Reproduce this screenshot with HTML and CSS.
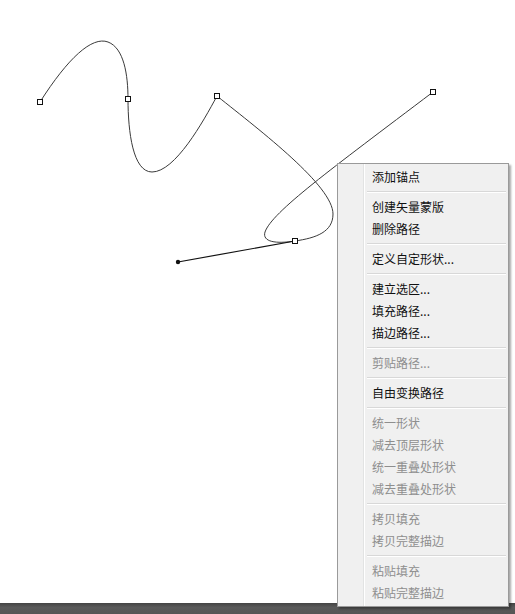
FILE: index.html
```html
<!DOCTYPE html>
<html lang="zh">
<head>
<meta charset="utf-8">
<title>路径菜单</title>
<link rel="stylesheet" href="styles.css">
</head>
<body>
<div class="stage">
  <svg class="canvas" width="515" height="603" viewBox="0 0 515 603">
    <g fill="none" stroke="#3a3a3a" stroke-width="1">
      <path d="M40,102 C68,58 92,36 108,42 C124,48 128,75 128,99"/>
      <path d="M128,99 C128,132 133,172 152,172 C175,172 203,122 217,96"/>
      <path d="M217,96 C262,132 333,186 333,214 C333,232 316,238 295,241"/>
      <path d="M295,241 C276,244 262,242 265,232 C272,212 330,170 433,92"/>
    </g>
    <line x1="295" y1="241" x2="178" y2="262" stroke="#111" stroke-width="1.2"/>
    <circle cx="178" cy="262" r="2.2" fill="#111"/>
    <g fill="#fff" stroke="#111" stroke-width="1">
      <rect x="37.5" y="99.5" width="5" height="5"/>
      <rect x="125.5" y="96.5" width="5" height="5"/>
      <rect x="214.5" y="93.5" width="5" height="5"/>
      <rect x="292.5" y="238.5" width="5" height="5"/>
      <rect x="430.5" y="89.5" width="5" height="5"/>
    </g>
  </svg>
  <ul class="menu">
    <li class="item">添加锚点</li>
    <li class="sep"></li>
    <li class="item">创建矢量蒙版</li>
    <li class="item">删除路径</li>
    <li class="sep"></li>
    <li class="item">定义自定形状...</li>
    <li class="sep"></li>
    <li class="item">建立选区...</li>
    <li class="item">填充路径...</li>
    <li class="item">描边路径...</li>
    <li class="sep"></li>
    <li class="item disabled">剪贴路径...</li>
    <li class="sep"></li>
    <li class="item">自由变换路径</li>
    <li class="sep"></li>
    <li class="item disabled">统一形状</li>
    <li class="item disabled">减去顶层形状</li>
    <li class="item disabled">统一重叠处形状</li>
    <li class="item disabled">减去重叠处形状</li>
    <li class="sep"></li>
    <li class="item disabled">拷贝填充</li>
    <li class="item disabled">拷贝完整描边</li>
    <li class="sep"></li>
    <li class="item disabled">粘贴填充</li>
    <li class="item disabled">粘贴完整描边</li>
  </ul>
</div>
<div class="bottombar"></div>
</body>
</html>
```

FILE: styles.css
```css
html, body {
  margin: 0;
  padding: 0;
  background: #fff;
  width: 515px;
  height: 614px;
  overflow: hidden;
  font-family: "Noto Sans CJK SC", "Noto Sans", sans-serif;
}

.stage {
  position: relative;
  height: 603px;
  background: #fff;
}

.canvas {
  display: block;
}

.bottombar {
  height: 11px;
  background: linear-gradient(#444, #5a5a5a 40%, #555);
}

.menu {
  position: absolute;
  left: 337px;
  top: 163px;
  width: 170px;
  margin: 0;
  padding: 2px 0;
  list-style: none;
  border: 1px solid #9a9a9a;
  background: linear-gradient(to right,
    #f0f0f0 0, #f0f0f0 25px,
    #e2e3e3 25px, #e2e3e3 26px,
    #ffffff 26px, #ffffff 27px,
    #f0f0f0 27px);
  box-shadow: 2px 2px 2px rgba(0, 0, 0, 0.35);
  z-index: 2;
}

.item {
  height: 22px;
  line-height: 22px;
  padding-left: 34px;
  font-size: 12px;
  color: #111;
  white-space: nowrap;
}

.item.disabled {
  color: #8e8e8e;
}

.sep {
  height: 8px;
  margin-left: 29px;
  margin-right: 2px;
  background: linear-gradient(transparent 3px, #d8d8d8 3px, #d8d8d8 4px, #fff 4px, #fff 5px, transparent 5px);
}
```
